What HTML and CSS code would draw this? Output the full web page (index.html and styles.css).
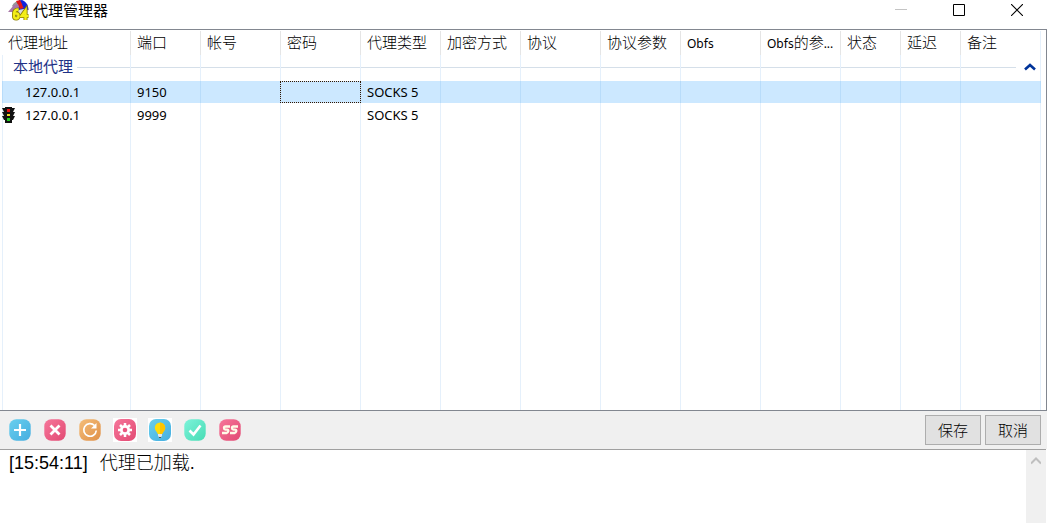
FILE: index.html
```html
<!DOCTYPE html>
<html lang="zh-CN">
<head>
<meta charset="utf-8">
<title>代理管理器</title>
<link rel="stylesheet" href="styles.css">
</head>
<body>
<header class="titlebar">
  <svg class="app-icon" viewBox="0 0 22 22" aria-hidden="true">
    <circle cx="12" cy="9.500" r="8.500" fill="#d9d9d9"/>
    <path d="M12 10V1a9 9 0 0 0-8 5z" fill="#999"/>
    <path d="M11 0c6 0 9.500 4 9.500 10l-5-1-5 1z" fill="#1024dc"/>
    <path d="M8 1l4-1 4 8-4 1z" fill="#e01818"/>
    <path d="M13 0c3 0 5 3 5 9l-3-2z" fill="#1024dc"/>
    <path d="M0 12l6-7 4-1 1 3-6 5z" fill="#a878a8"/>
    <g fill="none" stroke="#8a7d00" stroke-width="4"><path d="M10.500 9.500Q6 9.500 6 14v2q0 2.500 2.200 2.500T10.500 16 8.200 13.500 6 15"/><path d="M17.500 20V10.500L13.500 16H20.500"/></g>
    <g fill="none" stroke="#f4ee16" stroke-width="2.400"><path d="M10.500 9.500Q6 9.500 6 14v2q0 2.500 2.200 2.500T10.500 16 8.200 13.500 6 15"/><path d="M17.500 20V10.500L13.500 16H20.500"/></g>
  </svg>
  <h1 class="title">代理管理器</h1>
  <div class="window-controls">
    <button class="window-button" aria-label="最小化" disabled><svg viewBox="0 0 12 12"><path d="M0 5.500h12" stroke="#c4c4c4"/></svg></button>
    <button class="window-button" aria-label="最大化"><svg viewBox="0 0 12 12"><path d="M.5.500h11v11H.5z" fill="none" stroke="#000"/></svg></button>
    <button class="window-button" aria-label="关闭"><svg viewBox="0 0 12 12"><path d="M0 0l12 12M12 0L0 12" stroke="#000" stroke-width="1.100"/></svg></button>
  </div>
</header>
<main class="list">
  <table class="proxies">
    <colgroup><col class="col-address"><col class="col-port"><col span="8" class="col-field"><col span="2" class="col-status"><col></colgroup>
    <thead>
      <tr><th>代理地址</th><th>端口</th><th>帐号</th><th>密码</th><th>代理类型</th><th>加密方式</th><th>协议</th><th>协议参数</th><th><span class="latin">Obfs</span></th><th><span class="latin">Obfs</span>的参<span class="latin">...</span></th><th>状态</th><th>延迟</th><th>备注</th></tr>
    </thead>
    <tbody>
      <tr class="group"><td><span class="group-name">本地代理</span></td><td></td><td></td><td></td><td></td><td></td><td></td><td></td><td></td><td></td><td></td><td></td><td><button class="collapse" aria-label="折叠本地代理"><svg viewBox="0 0 12 8"><path d="M1 6.500l5-4.500 5 4.500" fill="none" stroke="#003399" stroke-width="2.600"/></svg></button></td></tr>
      <tr class="proxy selected"><td><div class="address"><span class="marker"></span>127.0.0.1</div></td><td>9150</td><td></td><td class="focused"></td><td>SOCKS 5</td><td></td><td></td><td></td><td></td><td></td><td></td><td></td><td></td></tr>
      <tr class="proxy"><td><div class="address"><span class="marker"><svg viewBox="0 0 14 16" role="img" aria-label="当前代理"><path d="M3 0h7v1h3l-2 4h2l-2 4h2l-2 4h-1v3H3v-3H2L0 9h2L0 5h2L0 1h3z" fill="#111"/><path d="M5 2h3v3H5z" fill="#e51212"/><path d="M5 7h3v2H5z" fill="#eedb24"/><path d="M5 11h3v3H5z" fill="#20cd20"/></svg></span>127.0.0.1</div></td><td>9999</td><td></td><td></td><td>SOCKS 5</td><td></td><td></td><td></td><td></td><td></td><td></td><td></td><td></td></tr>
      <tr class="filler"><td></td><td></td><td></td><td></td><td></td><td></td><td></td><td></td><td></td><td></td><td></td><td></td><td></td></tr>
    </tbody>
  </table>
</main>
<div class="toolbar">
  <svg class="gradients" aria-hidden="true"><defs>
    <linearGradient id="blue" x2="1" y2="1"><stop stop-color="#68cfee"/><stop offset="1" stop-color="#46aee0"/></linearGradient>
    <linearGradient id="pink" x2="1" y2="1"><stop stop-color="#f6769a"/><stop offset="1" stop-color="#e24a73"/></linearGradient>
    <linearGradient id="orange" x2="1" y2="1"><stop stop-color="#f4bd78"/><stop offset="1" stop-color="#e09048"/></linearGradient>
    <linearGradient id="mint" x2="1" y2="1"><stop stop-color="#7cf3da"/><stop offset="1" stop-color="#48dcb4"/></linearGradient>
  </defs></svg>
  <div class="tools">
    <button class="tool" aria-label="添加"><svg viewBox="0 0 22 22"><rect x=".3" y=".3" width="21.400" height="21.400" rx="7" fill="url(#blue)"/><path d="M11 5v12M5 11h12" stroke="#fff" stroke-width="2.200"/></svg></button>
    <button class="tool" aria-label="删除"><svg viewBox="0 0 22 22"><rect x=".3" y=".3" width="21.400" height="21.400" rx="7" fill="url(#pink)"/><path d="M6.500 6.500l9 9M15.500 6.500l-9 9" stroke="#fff" stroke-width="2.800"/></svg></button>
    <button class="tool" aria-label="刷新"><svg viewBox="0 0 22 22"><rect x=".3" y=".3" width="21.400" height="21.400" rx="7" fill="url(#orange)"/><path d="M15.500 6.500A6.300 6.300 0 1 0 17.300 11.500" fill="none" stroke="#fff" stroke-width="1.700"/><path d="M17.500 4v5.500H12z" fill="#fff"/></svg></button>
    <button class="tool tool-plate" aria-label="设置"><svg viewBox="0 0 22 22"><rect width="22" height="22" rx="7" fill="url(#pink)"/><path d="M11 4v14M4 11h14M6 6l10 10M16 6L6 16" stroke="#fff" stroke-width="2.500"/><circle cx="11" cy="11" r="5" fill="#fff"/><circle cx="11" cy="11" r="2.300" fill="#e95880"/></svg></button>
    <button class="tool tool-plate" aria-label="检测"><svg viewBox="0 0 22 22"><rect width="22" height="22" rx="7" fill="url(#blue)"/><path d="M11 3.500a5.200 5.200 0 0 0-5.200 5.200c0 3 2.700 4.300 2.900 6.300h4.600c.2-2 2.900-3.300 2.900-6.300A5.200 5.200 0 0 0 11 3.500z" fill="#ffdc0c"/><path d="M11 3.500a5.200 5.200 0 0 1 5.200 5.200c0 3-2.700 4.300-2.900 6.300H11z" fill="#ffc400"/><path d="M9 15h4v2l-1 1h-2l-1-1z" fill="#e6e6e6"/><path d="M10 18h2v1h-2z" fill="#555"/></svg></button>
    <button class="tool" aria-label="启用"><svg viewBox="0 0 22 22"><rect x=".3" y=".3" width="21.400" height="21.400" rx="7" fill="url(#mint)"/><path d="M5.500 11.500l4 4 7-9" fill="none" stroke="#fff" stroke-width="2.600"/></svg></button>
    <button class="tool" aria-label="SS"><svg viewBox="0 0 22 22"><rect x=".3" y=".3" width="21.400" height="21.400" rx="7" fill="url(#pink)"/><path d="M11 7.500H6.500q-1.500 0-1.500 1.500t1.500 1.700h1.500q1.500 0 1.300 1.500T7.500 14H3M19 7.500h-4.500q-1.500 0-1.500 1.500t1.500 1.700H16q1.500 0 1.300 1.500T15.500 14H11" fill="none" stroke="#fffbe8" stroke-width="2.300"/></svg></button>
  </div>
  <div class="actions">
    <button class="action">保存</button>
    <button class="action">取消</button>
  </div>
</div>
<section class="log" aria-label="日志">
  <p class="message"><time>[15:54:11]</time><span class="entry">代理已加载.</span></p>
  <div class="scrollbar"><button class="scroll-up" aria-label="向上滚动"><svg viewBox="0 0 10 8"><path d="M0 6.500l5-5 5 5" fill="none" stroke="#bfbfbf" stroke-width="2"/></svg></button></div>
</section>
</body>
</html>
```
FILE: styles.css
```css
* { box-sizing: border-box; }

body {
  margin: 0;
  height: 100vh;
  display: flex;
  flex-direction: column;
  overflow: hidden;
  background: #fff;
  color: #000;
  font-family: "Noto Sans", "Noto Sans CJK SC", sans-serif;
  font-size: 13px;
}

button {
  margin: 0;
  padding: 0;
  border: 0;
  background: none;
  color: inherit;
  font: inherit;
}

svg { display: block; }

.titlebar {
  flex: none;
  display: flex;
  align-items: flex-start;
  height: 29px;
  padding: 0 1px 0 8px;
}

.app-icon { width: 22px; height: 22px; margin-right: 3px; }

.title {
  flex: 1;
  margin: 0;
  font: 15px/20px "Noto Sans CJK SC", sans-serif;
}

.window-controls { display: flex; }

.window-button {
  width: 58px;
  height: 20px;
  display: grid;
  place-items: center;
}

.window-button svg { width: 12px; height: 12px; }

.list {
  flex: 1;
  min-height: 0;
  display: grid;
  padding: 1px 5px 0 2px;
  border: solid #828790;
  border-width: 1px 1px 1px 0;
}

.proxies {
  width: 100%;
  height: 100%;
  table-layout: fixed;
  border-spacing: 0;
}

.col-address { width: 128px; }
.col-port { width: 70px; }
.col-field { width: 80px; }
.col-status { width: 60px; }

.proxies th,
.proxies td {
  padding: 0 0 0 6px;
  border-left: 1px solid #e5f0fb;
  text-align: left;
  vertical-align: top;
  white-space: nowrap;
}

.proxies th:first-child { padding-left: 5px; }
.proxies td:first-child { padding-left: 0; }
.proxies th:last-child,
.proxies td:last-child { border-right: 1px solid #e5f0fb; }

.proxies thead th {
  height: 24px;
  border-color: #e5e5e5;
  font: 300 15px/22px "Noto Sans CJK SC", sans-serif;
}

.proxies thead th:first-child { border-left-color: transparent; }

.latin { font: 12px "Noto Sans", sans-serif; }

.proxies .group td {
  height: 26px;
  background: linear-gradient(#d5dfe9, #d5dfe9) 0 12px / 100% 1px no-repeat;
}

.group-name {
  display: block;
  width: 74px;
  padding-left: 10px;
  background: #fff;
  color: #1e3287;
  font: 15px/22px "Noto Sans CJK SC", sans-serif;
}

.proxies .group td:last-child { background-size: calc(100% - 24px) 1px; }

.collapse {
  display: block;
  margin: 8px 4px 0 auto;
}

.collapse svg { width: 12px; height: 8px; }

.proxies .proxy td {
  height: 24px;
  line-height: 20px;
  vertical-align: middle;
}

.proxies .selected td {
  height: 22px;
  background: #cce8ff;
  border-color: #b8dcfa;
}

.address { display: flex; align-items: center; }
.marker { width: 22px; }
.marker svg { width: 14px; height: 16px; margin-left: -1px; }

.focused { position: relative; }

.focused::after {
  content: "";
  position: absolute;
  inset: 0 -1px 0 -1px;
  border: 1px dotted #331700;
}

.toolbar {
  flex: none;
  display: flex;
  align-items: center;
  justify-content: space-between;
  height: 38px;
  padding: 0 6px 0 8px;
  background: #f0f0f0;
}

.gradients { position: absolute; width: 0; height: 0; }

.tools { display: flex; gap: 11px; }

.tool {
  width: 24px;
  height: 24px;
  padding: 1px;
}

.tool-plate { background: #fff; }

.actions { display: flex; gap: 4px; }

.action {
  width: 56px;
  height: 30px;
  border: 1px solid #adadad;
  background: #e1e1e1;
  font: 300 15px/26px "Noto Sans CJK SC", sans-serif;
}

.log {
  flex: none;
  display: flex;
  justify-content: space-between;
  height: 74px;
  margin-right: 1px;
  border-top: 1px solid #a0a0a0;
}

.message {
  display: flex;
  gap: 12px;
  margin: 0;
  padding-left: 9px;
  font: 18px/26px "Liberation Sans", "Noto Sans CJK SC", sans-serif;
}

.entry { color: #000; font-weight: 300; }

.scrollbar { width: 20px; background: #f0f0f0; }

.scroll-up {
  display: grid;
  place-items: center;
  width: 100%;
  height: 22px;
}

.scroll-up svg { width: 10px; height: 8px; }
```
